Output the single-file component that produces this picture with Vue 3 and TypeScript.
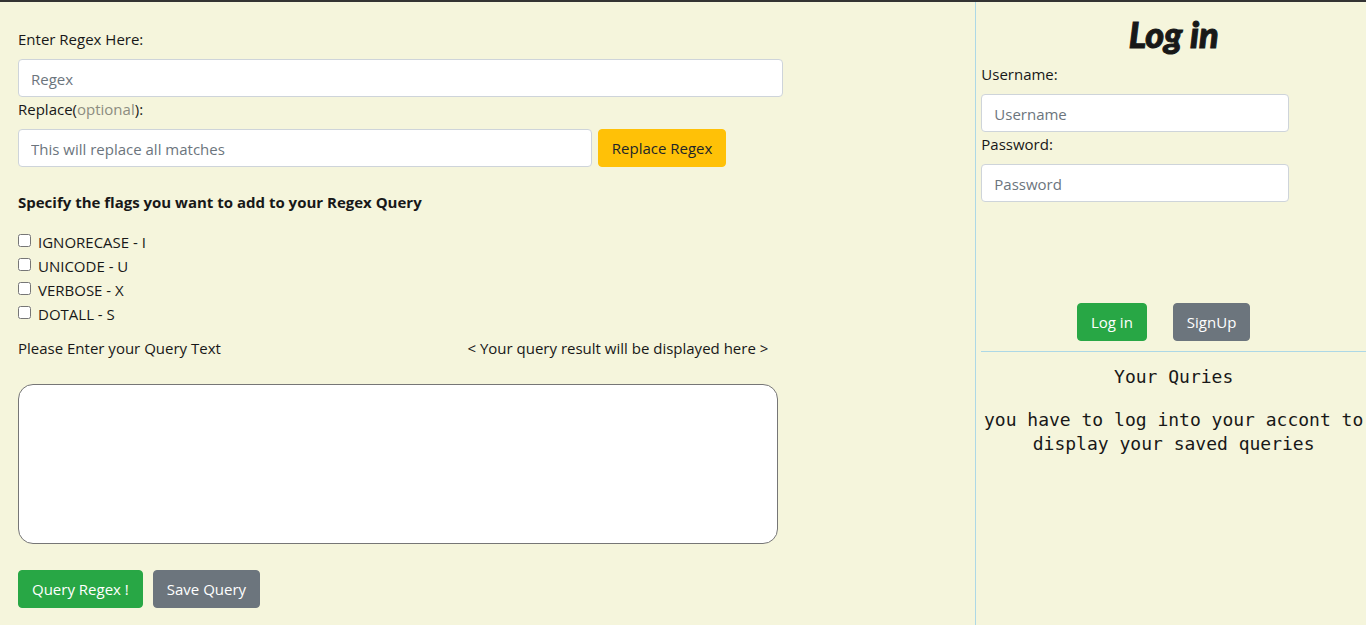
<script setup lang="ts">
import { ref } from 'vue'

interface Flag {
  id: string
  label: string
  checked: boolean
}

const regex = ref('')
const replacement = ref('')
const queryText = ref('')
const username = ref('')
const password = ref('')

const flags = ref<Flag[]>([
  { id: 'flag-i', label: 'IGNORECASE - I', checked: false },
  { id: 'flag-u', label: 'UNICODE - U', checked: false },
  { id: 'flag-x', label: 'VERBOSE - X', checked: false },
  { id: 'flag-s', label: 'DOTALL - S', checked: false },
])
</script>

<template>
  <div class="page">
    <main class="query">
      <label class="label" for="regex">Enter Regex Here:</label>
      <input id="regex" v-model="regex" class="field" type="text" placeholder="Regex" />

      <label class="label" for="replacement">Replace(<span class="muted">optional</span>):</label>
      <div class="replace-row">
        <input
          id="replacement"
          v-model="replacement"
          class="field field-short"
          type="text"
          placeholder="This will replace all matches"
        />
        <button class="btn btn-warning" type="button">Replace Regex</button>
      </div>

      <h2 class="flags-title">Specify the flags you want to add to your Regex Query</h2>
      <div class="flags">
        <div v-for="flag in flags" :key="flag.id" class="flag">
          <input :id="flag.id" v-model="flag.checked" class="check" type="checkbox" />
          <label :for="flag.id">{{ flag.label }}</label>
        </div>
      </div>

      <div class="captions">
        <label for="query-text">Please Enter your Query Text</label>
        <output>&lt; Your query result will be displayed here &gt;</output>
      </div>
      <textarea id="query-text" v-model="queryText" class="query-text"></textarea>

      <div class="actions">
        <button class="btn btn-success" type="button">Query Regex !</button>
        <button class="btn btn-secondary" type="button">Save Query</button>
      </div>
    </main>

    <aside class="side">
      <form class="login" @submit.prevent>
        <h1 class="login-title">Log in</h1>
        <label class="label" for="username">Username:</label>
        <input id="username" v-model="username" class="field" type="text" placeholder="Username" />
        <label class="label" for="password">Password:</label>
        <input id="password" v-model="password" class="field" type="password" placeholder="Password" />
        <div class="login-actions">
          <button class="btn btn-success" type="submit">Log in</button>
          <button class="btn btn-secondary" type="button">SignUp</button>
        </div>
      </form>
      <section class="saved">
        <p>Your Quries</p>
        <p>you have to log into your accont to display your saved queries</p>
      </section>
    </aside>
  </div>
</template>

<style>
body {
  margin: 0;
  background: #f5f5dc;
}
</style>

<style scoped>
.page,
.page * {
  box-sizing: border-box;
}

.page {
  display: grid;
  grid-template-columns: 71.4% minmax(0, 1fr);
  min-height: 100vh;
  border-top: 2px solid #333333;
  background: #f5f5dc;
  color: #181818;
  font-family: 'Segoe UI', 'Open Sans', 'Noto Sans', sans-serif;
  font-size: 15px;
  line-height: 24px;
}

.query {
  padding: 25px 1px 17px 18px;
}

.label {
  display: block;
  width: fit-content;
  margin-bottom: 8px;
}

.muted {
  color: #8c8c80;
}

.field {
  display: block;
  width: 80%;
  height: 38px;
  padding: 7px 12px 5px;
  border: 1px solid #ced4da;
  border-radius: 4px;
  background: #ffffff;
  color: #495057;
  font: inherit;
}

.field::placeholder {
  color: #6c757d;
  opacity: 1;
}

.replace-row {
  display: flex;
  gap: 6px;
}

.field-short {
  width: 60%;
}

.btn {
  height: 38px;
  padding: 6px 13px;
  border: 1px solid transparent;
  border-radius: 4px;
  font: inherit;
  white-space: nowrap;
  cursor: pointer;
}

.btn-warning {
  border-color: #ffc107;
  background: #ffc107;
  color: #212529;
}

.btn-success {
  border-color: #28a745;
  background: #28a745;
  color: #ffffff;
}

.btn-secondary {
  border-color: #6c757d;
  background: #6c757d;
  color: #ffffff;
}

.flags-title {
  margin: 23px 0 16px;
  font-size: 15px;
  font-weight: 700;
}

.flag {
  display: flex;
  align-items: flex-start;
  gap: 7px;
}

.check {
  width: 13px;
  height: 13px;
  margin: 4px 0 0;
}

.captions {
  display: grid;
  grid-template-columns: 47% 1fr;
  margin: 10px 0 24px;
}

.query-text {
  display: block;
  width: 760px;
  max-width: 100%;
  height: 160px;
  padding: 10px;
  border: 1px solid #767676;
  border-radius: 15px;
  background: #ffffff;
  font: inherit;
  resize: none;
}

.actions {
  display: flex;
  gap: 10px;
  margin-top: 26px;
}

.side {
  padding-left: 5px;
  border-left: 1px solid #add8e6;
}

.login {
  padding: 10px 0;
  border-bottom: 1px solid #add8e6;
}

.login-title {
  margin: 0 0 6px;
  font-family: Forte, Lato, sans-serif;
  font-size: 36px;
  font-style: italic;
  font-weight: 900;
  line-height: 44px;
  text-align: center;
  -webkit-text-stroke: 1px #181818;
}

.login-actions {
  display: flex;
  justify-content: center;
  gap: 26px;
  margin-top: 101px;
  padding-right: 20px;
}

.saved {
  padding-top: 13px;
  font-family: Consolas, 'DejaVu Sans Mono', monospace;
  font-size: 18px;
  text-align: center;
}

.saved p {
  margin: 0 0 19px;
}
</style>
